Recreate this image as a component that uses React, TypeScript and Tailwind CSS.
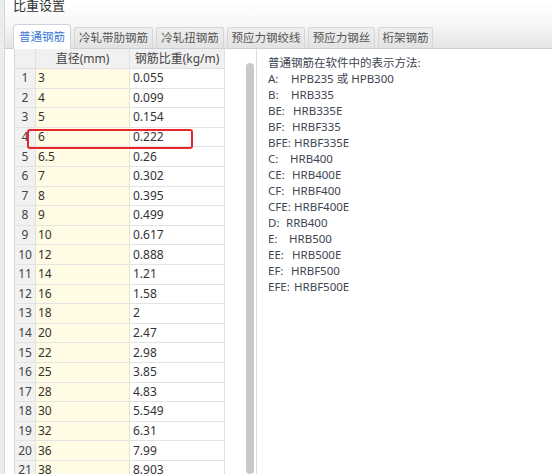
import React from "react";

const rows: [string, string, string][] = [
  ["1", "3", "0.055"],
  ["2", "4", "0.099"],
  ["3", "5", "0.154"],
  ["4", "6", "0.222"],
  ["5", "6.5", "0.26"],
  ["6", "7", "0.302"],
  ["7", "8", "0.395"],
  ["8", "9", "0.499"],
  ["9", "10", "0.617"],
  ["10", "12", "0.888"],
  ["11", "14", "1.21"],
  ["12", "16", "1.58"],
  ["13", "18", "2"],
  ["14", "20", "2.47"],
  ["15", "22", "2.98"],
  ["16", "25", "3.85"],
  ["17", "28", "4.83"],
  ["18", "30", "5.549"],
  ["19", "32", "6.31"],
  ["20", "36", "7.99"],
  ["21", "38", "8.903"],
];

const tabs = [
  { name: "普通钢筋", w: "w-[58px]" },
  { name: "冷轧带肋钢筋", w: "w-[79px]" },
  { name: "冷轧扭钢筋", w: "w-[68px]" },
  { name: "预应力钢绞线", w: "w-[78px]" },
  { name: "预应力钢丝", w: "w-[67px]" },
  { name: "桁架钢筋", w: "w-[55px]" },
];

const grades = [
  { label: "A:", value: "HPB235 或 HPB300", w: "w-[23px]" },
  { label: "B:", value: "HRB335", w: "w-[23px]" },
  { label: "BE:", value: "HRB335E", w: "w-[25px]" },
  { label: "BF:", value: "HRBF335", w: "w-[24px]" },
  { label: "BFE:", value: "HRBF335E", w: "w-[26px]" },
  { label: "C:", value: "HRB400", w: "w-[22px]" },
  { label: "CE:", value: "HRB400E", w: "w-[24px]" },
  { label: "CF:", value: "HRBF400", w: "w-[24px]" },
  { label: "CFE:", value: "HRBF400E", w: "w-[26px]" },
  { label: "D:", value: "RRB400", w: "w-[18px]" },
  { label: "E:", value: "HRB500", w: "w-[21px]" },
  { label: "EE:", value: "HRB500E", w: "w-[24px]" },
  { label: "EF:", value: "HRBF500", w: "w-[23px]" },
  { label: "EFE:", value: "HRBF500E", w: "w-[26px]" },
];

const App = () => {
  return (
    <div className="relative w-[552px] h-[474px] overflow-hidden bg-white flex font-['Noto_Sans','Noto_Sans_CJK_SC',sans-serif] text-[12px] text-[#333]">
      {/* dialog frame edge */}
      <div className="w-[5px] shrink-0 bg-[#ececec] border-r border-[#d7d7d7]" />

      <div className="flex-1 flex flex-col min-w-0">
        {/* title + tabs */}
        <div className="h-[49px] shrink-0 bg-linear-to-b from-white via-[#f7f7f7] to-[#e5e5e5] border-b border-[#c9d0da] flex flex-col">
          <div className="h-[24px] pl-[8px]">
            <div className="text-[13px] leading-[13px] -mt-[1px] text-[#333]">比重设置</div>
          </div>
          <div className="h-[24px] pl-[8px] flex items-end gap-[3px]">
            {tabs.map((t, i) =>
              i === 0 ? (
                <div
                  key={t.name}
                  className={`${t.w} h-[25px] -mb-px bg-white border border-b-0 border-[#cdd3db] rounded-t-[4px] flex items-center justify-center text-[11.5px] text-[#3a7bd5]`}
                >
                  {t.name}
                </div>
              ) : (
                <div
                  key={t.name}
                  className={`${t.w} h-[21px] bg-linear-to-b from-[#efefef] to-[#e3e3e3] border border-b-0 border-[#d6d6d6] rounded-t-[3px] flex items-center justify-center text-[11.5px] text-[#555]`}
                >
                  {t.name}
                </div>
              )
            )}
          </div>
        </div>

        {/* body */}
        <div className="flex-1 flex min-h-0">
          {/* table */}
          <div className="ml-[9px] w-[211px] border-l border-[#d8d8d8] shrink-0">
            <div className="flex h-[20px] border-b border-[#e0e0e0] bg-[#f1f1f1]">
              <div className="w-[21px] border-r border-[#e0e0e0]" />
              <div className="w-[94px] border-r border-[#e0e0e0] flex items-center justify-center text-[#444]">直径(mm)</div>
              <div className="w-[95px] border-r border-[#e0e0e0] flex items-center justify-center text-[#444]">钢筋比重(kg/m)</div>
            </div>
            {rows.map(([n, d, w]) => (
              <div key={n} className="flex h-[19.6px] border-b border-[#e3e3e3]">
                <div className="w-[21px] border-r border-[#e0e0e0] bg-[#f1f1f1] flex items-center justify-center text-[#444]">{n}</div>
                <div className="w-[94px] border-r border-[#e8e4cf] bg-[#fffbe4] flex items-center pl-[2px] text-[#333]">{d}</div>
                <div className="w-[95px] border-r border-[#e0e0e0] flex items-center pl-[3px] text-[#333]">{w}</div>
              </div>
            ))}
          </div>

          {/* scrollbar */}
          <div className="w-[21px] shrink-0" />
          <div className="w-[8px] shrink-0 pt-[14px]">
            <div className="h-full rounded-[4px] bg-[#c9c9c9]" />
          </div>
          <div className="w-[3px] shrink-0 border-r border-[#dcdcdc]" />

          {/* description */}
          <div className="flex-1 pl-[11px] pt-[6px] text-[11.5px] leading-[16px] text-[#3e4452]">
            <div>普通钢筋在软件中的表示方法:</div>
            {grades.map((g) => (
              <div key={g.label} className="whitespace-nowrap">
                <span className={`inline-block ${g.w}`}>{g.label}</span>
                <span>{g.value}</span>
              </div>
            ))}
          </div>
        </div>
      </div>

      {/* highlight box */}
      <div className="absolute left-[27px] top-[129px] w-[166px] h-[20px] border-2 border-[#e8262b] rounded-[3px]" />
    </div>
  );
};

export default App;
